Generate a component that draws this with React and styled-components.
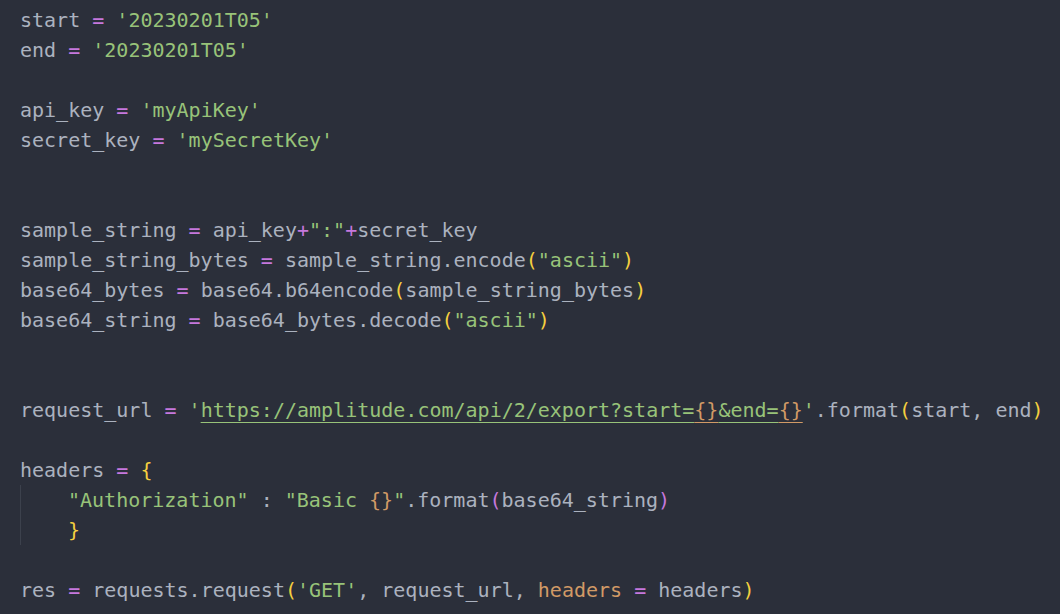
import React from 'react';
import styled, { createGlobalStyle } from 'styled-components';

const GlobalStyle = createGlobalStyle`
  html, body {
    margin: 0;
    padding: 0;
    background-color: #2b2f3a;
  }
`;

const colors = {
  plain: '#abb2bf',
  op: '#c678dd',
  str: '#98c379',
  bracket: '#f5cf3f',
  param: '#d19a66',
  fmt: '#d19a66',
};

const Editor = styled.div`
  width: 1060px;
  height: 614px;
  box-sizing: border-box;
  padding: 5px 0 0 20px;
  background-color: #2b2f3a;
  font-family: 'DejaVu Sans Mono', 'Liberation Mono', monospace;
  font-size: 20px;
  color: ${colors.plain};
  overflow: hidden;
`;

const Line = styled.div`
  height: 30px;
  line-height: 30px;
  white-space: pre;
`;

const IndentBlock = styled.div`
  border-left: 1px solid #3c414c;
  padding-left: 47px;
`;

const Token = styled.span`
  color: ${(props) => colors[props.kind] || colors.plain};
`;

const Link = styled.span`
  color: ${colors.str};
  text-decoration: underline;
  text-decoration-color: ${(props) => (props.fmt ? colors.fmt : colors.str)};
  text-decoration-thickness: 1px;
  text-underline-offset: 5px;
`;

const Fmt = styled(Link)`
  color: ${colors.fmt};
`;

function App() {
  return (
    <Editor>
      <GlobalStyle />
      <Line>
        start <Token kind="op">=</Token> <Token kind="str">'20230201T05'</Token>
      </Line>
      <Line>
        end <Token kind="op">=</Token> <Token kind="str">'20230201T05'</Token>
      </Line>
      <Line />
      <Line>
        api_key <Token kind="op">=</Token> <Token kind="str">'myApiKey'</Token>
      </Line>
      <Line>
        secret_key <Token kind="op">=</Token> <Token kind="str">'mySecretKey'</Token>
      </Line>
      <Line />
      <Line />
      <Line>
        sample_string <Token kind="op">=</Token> api_key<Token kind="op">+</Token>
        <Token kind="str">":"</Token>
        <Token kind="op">+</Token>secret_key
      </Line>
      <Line>
        sample_string_bytes <Token kind="op">=</Token> sample_string.encode
        <Token kind="bracket">(</Token>
        <Token kind="str">"ascii"</Token>
        <Token kind="bracket">)</Token>
      </Line>
      <Line>
        base64_bytes <Token kind="op">=</Token> base64.b64encode
        <Token kind="bracket">(</Token>sample_string_bytes<Token kind="bracket">)</Token>
      </Line>
      <Line>
        base64_string <Token kind="op">=</Token> base64_bytes.decode
        <Token kind="bracket">(</Token>
        <Token kind="str">"ascii"</Token>
        <Token kind="bracket">)</Token>
      </Line>
      <Line />
      <Line />
      <Line>
        request_url <Token kind="op">=</Token> <Token kind="str">'</Token>
        <Link>https://amplitude.com/api/2/export?start=</Link>
        <Fmt fmt>{'{}'}</Fmt>
        <Link>&amp;end=</Link>
        <Fmt fmt>{'{}'}</Fmt>
        <Token kind="str">'</Token>.format<Token kind="bracket">(</Token>start, end
        <Token kind="bracket">)</Token>
      </Line>
      <Line />
      <Line>
        headers <Token kind="op">=</Token> <Token kind="bracket">{'{'}</Token>
      </Line>
      <IndentBlock>
        <Line>
          <Token kind="str">"Authorization"</Token> : <Token kind="str">"Basic </Token>
          <Token kind="fmt">{'{}'}</Token>
          <Token kind="str">"</Token>.format<Token kind="op">(</Token>base64_string
          <Token kind="op">)</Token>
        </Line>
        <Line>
          <Token kind="bracket">{'}'}</Token>
        </Line>
      </IndentBlock>
      <Line />
      <Line>
        res <Token kind="op">=</Token> requests.request<Token kind="bracket">(</Token>
        <Token kind="str">'GET'</Token>, request_url, <Token kind="param">headers</Token>{' '}
        <Token kind="op">=</Token> headers<Token kind="bracket">)</Token>
      </Line>
    </Editor>
  );
}

export default App;
